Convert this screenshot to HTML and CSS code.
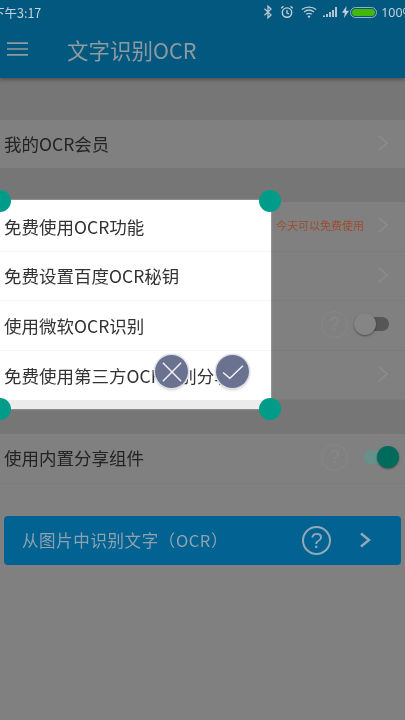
FILE: index.html
```html
<!DOCTYPE html>
<html lang="zh-CN">
<head>
<meta charset="utf-8">
<title>文字识别OCR</title>
<link rel="stylesheet" href="styles.css">
</head>
<body>
<div class="screen">
  <header class="appbar">
    <div class="status">
      <span class="clock">下午3:17</span>
      <div class="status-icons">
        <svg class="ic" width="10" height="14" viewBox="0 0 10 14"><path d="M1.500 3.800 8 9.900 5 12.800V1.200l3 2.900-6.500 6.100" fill="none" stroke="#b9c9d4" stroke-width="1.300"/></svg>
        <svg class="ic" width="14" height="14" viewBox="0 0 14 14"><circle cx="7" cy="7.600" r="4.700" fill="none" stroke="#c3d0d9" stroke-width="1.400"/><path d="M7 5v3l2 .8M1.200 3.200 3.400 1.200M12.800 3.200 10.600 1.200" fill="none" stroke="#c3d0d9" stroke-width="1.300"/></svg>
        <svg class="ic wifi" width="16" height="12" viewBox="0 0 16 12"><path d="M.8 3.600C5 .2 11 .2 15.200 3.600M3 6c3-2.400 7-2.400 10 0M5.200 8.300c1.700-1.200 3.900-1.200 5.600 0" fill="none" stroke="#b9c9d4" stroke-width="1.300"/><circle cx="8" cy="10.600" r="1.200" fill="#b9c9d4"/></svg>
        <svg class="ic signal" width="14" height="10" viewBox="0 0 14 10"><path d="M0 8.500h2V10H0zM3 7h2v3H3zM6 5h2v5H6zM9 3h2v7H9zM12 0h2v10h-2z" fill="#b4c5d0"/></svg>
        <svg class="ic bolt" width="7" height="12" viewBox="0 0 7 12"><path d="M4.500 0 0 6.800h2.800L2 12l5-7.200H4z" fill="#c3d0d9"/></svg>
        <span class="battery"><span class="battery-fill"></span></span>
      </div>
      <span class="percent">100%</span>
    </div>
    <div class="toolbar">
      <svg class="menu" width="21" height="14" viewBox="0 0 21 14"><path d="M0 1.200h21M0 7h21M0 12.800h21" stroke="#8f9aa1" stroke-width="1.700"/></svg>
      <h1 class="title">文字识别OCR</h1>
    </div>
  </header>

  <main class="content">
    <section class="upper">
      <div class="row single"><span class="label">我的OCR会员</span><svg class="chev" width="12" height="18" viewBox="0 0 12 18"><path d="M1.500 1.500 10 9l-8.500 7.500" fill="none" stroke="#8b8b8b" stroke-width="1.600"/></svg></div>
      <div class="group">
        <div class="row">
          <span class="label">免费使用OCR功能</span>
          <span class="hint">今天可以免费使用</span>
          <svg class="chev" width="12" height="18" viewBox="0 0 12 18"><path d="M1.500 1.500 10 9l-8.500 7.500" fill="none" stroke="#8b8b8b" stroke-width="1.600"/></svg>
        </div>
        <div class="row">
          <span class="label">免费设置百度OCR秘钥</span>
          <svg class="chev" width="12" height="18" viewBox="0 0 12 18"><path d="M1.500 1.500 10 9l-8.500 7.500" fill="none" stroke="#8b8b8b" stroke-width="1.600"/></svg>
        </div>
        <div class="row">
          <span class="label">使用微软OCR识别</span>
          <span class="help">?</span>
          <span class="toggle off"><span class="thumb"></span></span>
        </div>
        <div class="row">
          <span class="label">免费使用第三方OCR识别分享</span>
          <svg class="chev" width="12" height="18" viewBox="0 0 12 18"><path d="M1.500 1.500 10 9l-8.500 7.500" fill="none" stroke="#8b8b8b" stroke-width="1.600"/></svg>
        </div>
      </div>
    </section>
    <section class="lower">
      <div class="row">
        <span class="label">使用内置分享组件</span>
        <span class="help wide">?</span>
        <span class="toggle on"><span class="thumb"></span></span>
      </div>
      <button class="ocr-button" type="button">
        <span class="ocr-text">从图片中识别文字（OCR）</span>
        <span class="ocr-help">?</span>
        <svg class="ocr-chev" width="13" height="18" viewBox="0 0 13 18"><path d="M2 2.500 10 9l-8 6.500" fill="none" stroke="#93a9b6" stroke-width="2.400"/></svg>
      </button>
    </section>
  </main>

  <div class="crop">
    <div class="crop-row">免费使用OCR功能</div>
    <div class="crop-row">免费设置百度OCR秘钥</div>
    <div class="crop-row">使用微软OCR识别</div>
    <div class="crop-row">免费使用第三方OCR识别分享</div>
    <span class="handle tl"></span>
    <span class="handle tr"></span>
    <span class="handle bl"></span>
    <span class="handle br"></span>
    <span class="action cancel">
      <svg width="22" height="22" viewBox="0 0 24 24"><path d="M2 2l20 20M22 2 2 22" stroke="#f4f5f8" stroke-width="1.500"/></svg>
    </span>
    <span class="action confirm">
      <svg width="24" height="18" viewBox="0 0 26 20"><path d="M2 10.500 9.500 17 24 3" fill="none" stroke="#f4f5f8" stroke-width="1.500"/></svg>
    </span>
  </div>
</div>
</body>
</html>
```

FILE: styles.css
```css
* { box-sizing: border-box; }
html, body { margin: 0; padding: 0; }
body {
  width: 405px;
  height: 720px;
  overflow: hidden;
  background: #808080;
  font-family: "Noto Sans CJK SC", "Noto Sans", sans-serif;
}
.screen {
  position: relative;
  width: 405px;
  height: 720px;
  overflow: hidden;
  background: #808080;
  filter: blur(.45px);
}
.appbar { background: #02587f; height: 78px; box-shadow: 0 2px 3px rgba(60, 60, 60, .6); position: relative; }
.status {
  height: 24px;
  display: flex;
  align-items: center;
  color: #c4d1da;
  font-size: 12.500px;
  font-family: "Noto Sans", sans-serif;
}
.clock { margin-left: -8px; white-space: nowrap; font-family: "Noto Sans CJK SC", sans-serif; }
.status-icons { margin-left: auto; display: flex; align-items: center; }
.ic { display: block; margin-right: 7px; }
.wifi { margin-right: 6px; }
.signal { margin-right: 5px; }
.bolt { margin-right: 1px; }
.battery {
  display: block;
  width: 27px;
  height: 11px;
  border: 1px solid #9cb0bd;
  border-radius: 6px;
  padding: 1px;
}
.battery-fill { display: block; height: 100%; background: #43b80a; border-radius: 4px; }
.percent { margin-left: 4px; margin-right: -8px; white-space: nowrap; }
.toolbar { height: 54px; display: flex; align-items: center; padding-left: 7px; padding-bottom: 4px; }
.menu { display: block; }
.title { margin: 0 0 0 39px; font-size: 21.500px; font-weight: 400; color: #8f9aa1; white-space: nowrap; }

.upper { background: #767676; padding: 42px 0 34px; }
.lower { background: #808080; }
.row.single { height: 48px; border-bottom: 0; margin-bottom: 34px; background: #808080; }
.group { background: #808080; }
.row {
  height: 49.500px;
  display: flex;
  align-items: center;
  padding: 0 16px 2px 4px;
  border-bottom: 1px solid #7c7c7c;
  background: #808080;
}
.label { font-size: 17.500px; color: #232323; margin-right: auto; white-space: nowrap; }
.hint { font-size: 11px; color: #9f4a2c; margin-right: 13px; }
.chev { display: block; flex: none; }
.help {
  width: 27px;
  height: 27px;
  border: 1.500px solid #878787;
  border-radius: 50%;
  color: #878787;
  font: 19px/24px "Liberation Sans", sans-serif;
  text-align: center;
  margin-right: 7px;
}
.help.wide { margin-right: 16px; }
.toggle { position: relative; display: block; width: 34px; height: 14px; border-radius: 7px; }
.toggle.off { background: #565656; }
.toggle.on { background: #67908a; width: 35px; margin-right: -10px; }
.thumb { position: absolute; top: -4px; width: 22px; height: 22px; border-radius: 50%; box-shadow: 0 1px 2px rgba(0,0,0,.4); }
.off .thumb { left: -1px; background: #858585; }
.on .thumb { right: 0; background: #006b5b; }

.ocr-button {
  display: flex;
  align-items: center;
  width: 397px;
  height: 49px;
  margin: 32px 0 0 4px;
  padding: 0;
  border: 0;
  border-radius: 4px;
  background: #026292;
  font: inherit;
}
.ocr-text { font-size: 16.500px; color: #8fa3af; margin-left: 18px; white-space: nowrap; margin-right: auto; letter-spacing: .6px; }
.ocr-help {
  width: 29px;
  height: 29px;
  border: 2px solid #93a9b6;
  border-radius: 50%;
  color: #93a9b6;
  font: 400 22px/25px "Liberation Sans", sans-serif;
  text-align: center;
  margin-right: 28px;
}
.ocr-chev { display: block; margin-right: 29px; }

.crop {
  position: absolute;
  left: 0;
  top: 200px;
  width: 271px;
  height: 209px;
  background: #ececec;
  box-shadow: 0 0 2px rgba(255,255,255,.5);
}
.crop-row {
  height: 49.500px;
  background: #fff;
  border-bottom: 1px solid #f5f5f5;
  padding: 0 0 0 4px;
  display: flex;
  align-items: center;
  font-size: 17.500px;
  color: #333;
  white-space: nowrap;
  overflow: hidden;
}
.crop-row:first-child { height: 51.500px; padding-top: 2px; }
.crop-row:nth-child(4) { border-bottom: 0; }
.handle { position: absolute; width: 22px; height: 22px; border-radius: 50%; background: #009c8a; }
.tl { left: -11px; top: -10px; }
.tr { left: 259px; top: -10px; }
.bl { left: -11px; top: 198px; }
.br { left: 259px; top: 198px; }
.action {
  position: absolute;
  width: 33px;
  height: 33px;
  border-radius: 50%;
  background: #6a7290;
  box-shadow: 0 0 0 1.500px #dfe1e8, 0 2px 3px rgba(0,0,0,.2);
  display: flex;
  align-items: center;
  justify-content: center;
}
.cancel { left: 155px; top: 155px; }
.confirm { left: 216px; top: 155px; }
```
